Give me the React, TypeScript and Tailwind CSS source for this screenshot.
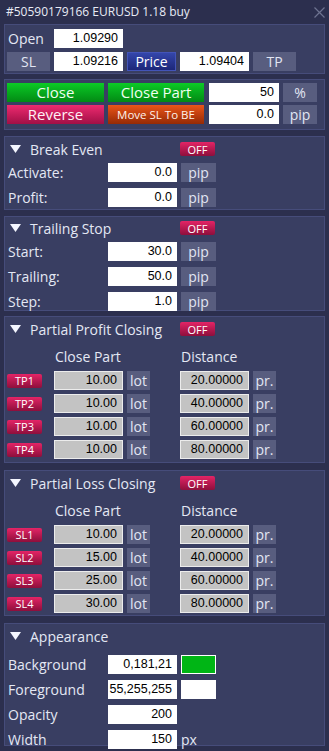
import React from "react";

const sans = "font-['Open_Sans',sans-serif]";
const num = "font-['Liberation_Sans',Arial,sans-serif]";

function Field({ value, grey, w = "w-[69px]", className = "" }: { value: string; grey?: boolean; w?: string; className?: string }) {
    return (
        <div
            className={`${w} h-[19px] flex items-center justify-end pr-[5px] text-[12.5px] text-black ${num} ${
                grey ? "bg-[#c3c3c3] border border-[#ececec]" : "bg-white"
            } ${className}`}
        >
            {value}
        </div>
    );
}

function GreyBtn({ label, w, className = "" }: { label: string; w: string; className?: string }) {
    return (
        <div className={`${w} h-[19px] flex items-center justify-center bg-[#585d7f] text-[14px] text-[#e2e6f3] ${sans} ${className}`}>
            {label}
        </div>
    );
}

function Badge({ label, w = "w-[35px]", h = "h-[14px]" }: { label: string; w?: string; h?: string }) {
    return (
        <div
            className={`${w} ${h} flex items-center justify-center rounded-[2px] bg-linear-to-b from-[#e42466] to-[#8e0f3c] text-[11px] leading-none text-white ${sans}`}
        >
            {label}
        </div>
    );
}

function Panel({ className, children }: { className: string; children: React.ReactNode }) {
    return <div className={`mx-[4px] border border-[#464c7a] bg-[#393e62] px-[2px] ${className}`}>{children}</div>;
}

function Header({ title, toggle = true }: { title: string; toggle?: boolean }) {
    return (
        <div className="h-[22px] flex items-center pl-[3px]">
            <svg width="11" height="8" viewBox="0 0 11 8">
                <polygon points="0,0 11,0 5.5,8" fill="#f4f6ff" />
            </svg>
            <div className={`ml-[9px] w-[150px] text-[14px] text-[#e4e8f4] ${sans}`}>{title}</div>
            {toggle && <Badge label="OFF" h="h-[14px]" />}
        </div>
    );
}

function Label({ text, w = "w-[101px]" }: { text: string; w?: string }) {
    return <div className={`${w} pl-[1px] text-[14px] text-[#e4e8f4] ${sans}`}>{text}</div>;
}

function PipRow({ label, value, unit = "pip" }: { label: string; value: string; unit?: string }) {
    return (
        <div className="flex items-center">
            <Label text={label} />
            <Field value={value} />
            <GreyBtn label={unit} w="w-[35px]" className="ml-[4px]" />
        </div>
    );
}

function PartialRows({ prefix, lots }: { prefix: string; lots: string[] }) {
    const dist = ["20.00000", "40.00000", "60.00000", "80.00000"];
    return (
        <>
            <div className="flex items-end pb-[2px] h-[29px]">
                <div className="w-[47px]" />
                <div className={`w-[126px] pl-[1px] text-[14px] text-[#e4e8f4] ${sans}`}>Close Part</div>
                <div className={`pl-[1px] text-[14px] text-[#e4e8f4] ${sans}`}>Distance</div>
            </div>
            <div className="mt-[2px] flex flex-col gap-[4px]">
                {lots.map((l, i) => (
                    <div key={i} className="flex items-center">
                        <Badge label={`${prefix}${i + 1}`} />
                        <Field value={l} grey className="ml-[12px]" />
                        <GreyBtn label="lot" w="w-[23px]" className="ml-[4px]" />
                        <Field value={dist[i]} grey className="ml-[30px]" />
                        <GreyBtn label="pr." w="w-[23px]" className="ml-[4px]" />
                    </div>
                ))}
            </div>
        </>
    );
}

export default function App() {
    return (
        <div className="w-full h-[751px] bg-[#2c2f4e] overflow-hidden">
            {/* Title bar */}
            <div className="h-[24px] flex items-center justify-between pl-[6px] pr-[4px]">
                <span className={`text-[12px] text-[#e8ebf5] ${sans}`}>#50590179166 EURUSD 1.18 buy</span>
                <svg width="11" height="11" viewBox="0 0 11 11">
                    <path d="M0.5 0.5 L10.5 10.5 M10.5 0.5 L0.5 10.5" stroke="#6e7390" strokeWidth="1.2" />
                </svg>
            </div>

            {/* Prices */}
            <Panel className="h-[50px] pt-[3px] flex flex-col gap-[3px]">
                <div className="flex items-center">
                    <Label text="Open" w="w-[47px]" />
                    <Field value="1.09290" />
                </div>
                <div className="flex items-center">
                    <GreyBtn label="SL" w="w-[43px]" />
                    <Field value="1.09216" className="ml-[4px]" />
                    <div
                        className={`ml-[4px] w-[49px] h-[19px] flex items-center justify-center border border-[#4354b8] bg-linear-to-b from-[#3446ab] to-[#1d2779] text-[14px] text-white ${sans}`}
                    >
                        Price
                    </div>
                    <Field value="1.09404" className="ml-[4px]" />
                    <GreyBtn label="TP" w="w-[43px]" className="ml-[4px]" />
                </div>
            </Panel>

            {/* Actions */}
            <Panel className="mt-[5px] h-[51px] pt-[3px] flex flex-col gap-[3px]">
                <div className="flex items-center">
                    <div className={`w-[97px] h-[19px] flex items-center justify-center bg-linear-to-b from-[#0ccb26] to-[#038a14] text-[15px] text-[#effff0] ${sans}`}>
                        Close
                    </div>
                    <div className={`ml-[4px] w-[96px] h-[19px] flex items-center justify-center bg-linear-to-b from-[#0ccb26] to-[#038a14] text-[15px] text-[#effff0] ${sans}`}>
                        Close Part
                    </div>
                    <Field value="50" w="w-[70px]" className="ml-[5px]" />
                    <GreyBtn label="%" w="w-[34px]" className="ml-[4px]" />
                </div>
                <div className="flex items-center">
                    <div className={`w-[97px] h-[19px] flex items-center justify-center bg-linear-to-b from-[#ee2a70] to-[#a10f46] text-[15px] text-[#fff0f5] ${sans}`}>
                        Reverse
                    </div>
                    <div className={`ml-[4px] w-[96px] h-[19px] flex items-center justify-center bg-linear-to-b from-[#ec5518] to-[#952a06] text-[11.5px] text-[#fff2ea] ${sans}`}>
                        Move SL To BE
                    </div>
                    <Field value="0.0" w="w-[70px]" className="ml-[5px]" />
                    <GreyBtn label="pip" w="w-[34px]" className="ml-[4px]" />
                </div>
            </Panel>

            {/* Break Even */}
            <Panel className="mt-[6px] h-[74px] pt-[1px]">
                <Header title="Break Even" />
                <div className="mt-[2px] flex flex-col gap-[4px]">
                    <PipRow label="Activate:" value="0.0" />
                    <PipRow label="Profit:" value="0.0" />
                </div>
            </Panel>

            {/* Trailing Stop */}
            <Panel className="mt-[6px] h-[95px]">
                <Header title="Trailing Stop" />
                <div className="mt-[2px] flex flex-col gap-[4px]">
                    <PipRow label="Start:" value="30.0" />
                    <PipRow label="Trailing:" value="50.0" />
                    <PipRow label="Step:" value="1.0" />
                </div>
            </Panel>

            {/* Partial Profit Closing */}
            <Panel className="mt-[5px] h-[147px] pt-[1px]">
                <Header title="Partial Profit Closing" />
                <PartialRows prefix="TP" lots={["10.00", "10.00", "10.00", "10.00"]} />
            </Panel>

            {/* Partial Loss Closing */}
            <Panel className="mt-[7px] h-[146px] pt-[1px]">
                <Header title="Partial Loss Closing" />
                <PartialRows prefix="SL" lots={["10.00", "15.00", "25.00", "30.00"]} />
            </Panel>

            {/* Appearance */}
            <Panel className="mt-[7px] h-[123px] pt-[1px]">
                <Header title="Appearance" toggle={false} />
                <div className="mt-[7px] flex flex-col gap-[4px]">
                    <div className="flex items-center">
                        <Label text="Background" />
                        <Field value="0,181,21" />
                        <div className="ml-[4px] w-[35px] h-[19px] border border-white bg-[#00b515]" />
                    </div>
                    <div className="flex items-center">
                        <Label text="Foreground" />
                        <div className={`w-[69px] h-[19px] overflow-hidden flex items-center justify-end pr-[5px] bg-white text-[12.5px] text-black whitespace-nowrap ${num}`}>
                            55,255,255
                        </div>
                        <div className="ml-[4px] w-[35px] h-[19px] bg-white" />
                    </div>
                    <div className="flex items-center">
                        <Label text="Opacity" />
                        <Field value="200" />
                    </div>
                    <div className="flex items-center">
                        <Label text="Width" />
                        <Field value="150" />
                        <span className={`ml-[4px] text-[14px] text-[#e4e8f4] ${sans}`}>px</span>
                    </div>
                </div>
            </Panel>
        </div>
    );
}
